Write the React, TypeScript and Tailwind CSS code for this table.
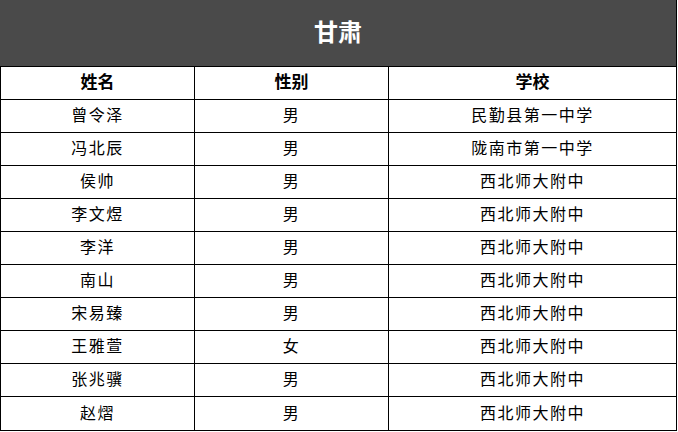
const rows: [string, string, string][] = [
  ["曾令泽", "男", "民勤县第一中学"],
  ["冯北辰", "男", "陇南市第一中学"],
  ["侯帅", "男", "西北师大附中"],
  ["李文煜", "男", "西北师大附中"],
  ["李洋", "男", "西北师大附中"],
  ["南山", "男", "西北师大附中"],
  ["宋易臻", "男", "西北师大附中"],
  ["王雅萱", "女", "西北师大附中"],
  ["张兆骥", "男", "西北师大附中"],
  ["赵熠", "男", "西北师大附中"],
]

function Row({ cells, head, last }: { cells: [string, string, string]; head?: boolean; last?: boolean }) {
  return (
    <div
      className={`grid grid-cols-[194px_194px_1fr] border-l border-b border-black text-black ${
        head ? "font-bold text-[17px]" : "text-[16px] tracking-[1.5px]"
      } ${last ? "h-[34px]" : "h-[33px]"}`}
    >
      <div className="flex items-center justify-center border-r border-black">{cells[0]}</div>
      <div className="flex items-center justify-center border-r border-black">{cells[1]}</div>
      <div className="flex items-center justify-center">{cells[2]}</div>
    </div>
  )
}

export default function App() {
  return (
    <div
      className="w-[678px] h-[432px] bg-white"
      style={{ fontFamily: '"Liberation Sans", "Noto Sans CJK SC", sans-serif' }}
    >
      <div className="w-[677px] border-r border-black">
        <div className="h-[67px] bg-[#4a4a4a] border-b border-black flex items-center justify-center">
          <span className="text-white text-[24px] font-bold">甘肃</span>
        </div>
        <Row cells={["姓名", "性别", "学校"]} head />
        {rows.map((r, i) => (
          <Row key={i} cells={r} last={i === rows.length - 1} />
        ))}
      </div>
    </div>
  )
}
